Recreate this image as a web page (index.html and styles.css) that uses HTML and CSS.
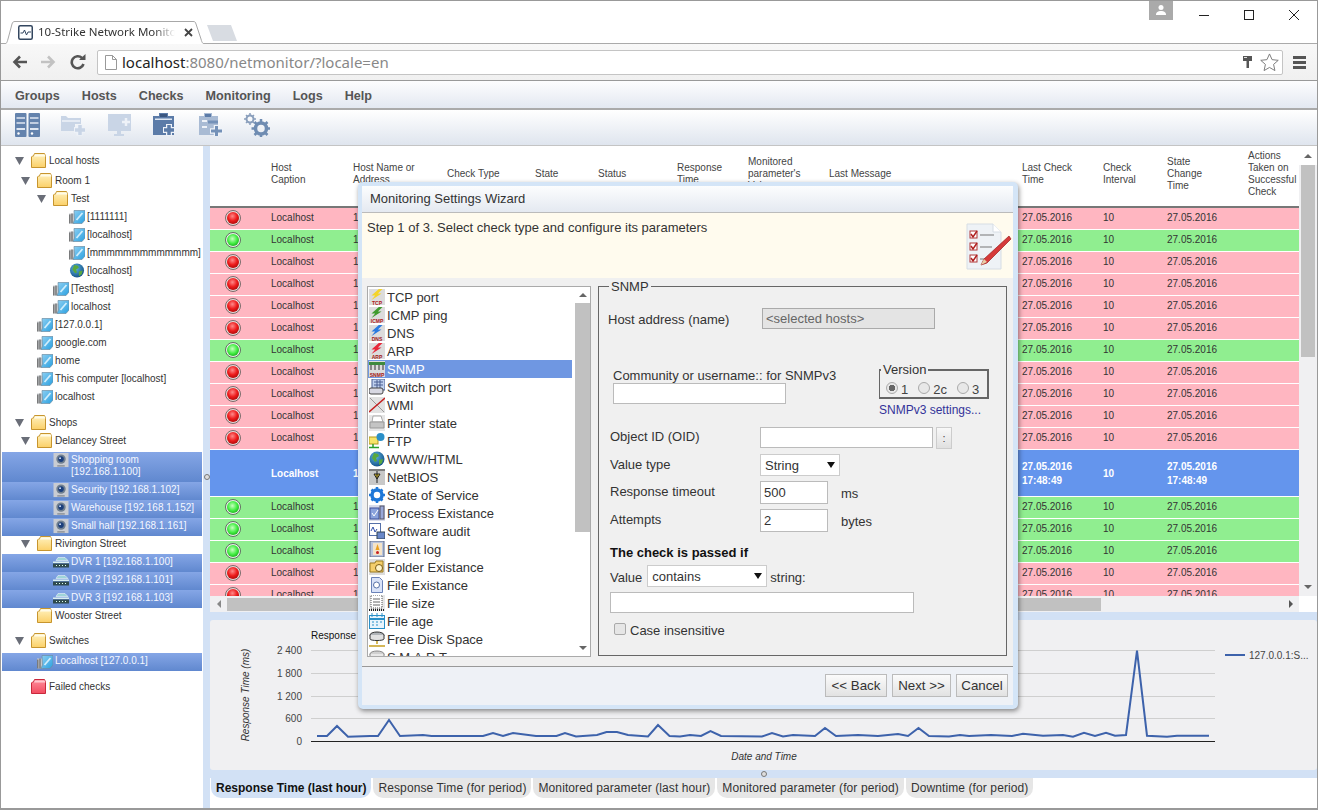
FILE: index.html
```html
<!DOCTYPE html>
<html lang="en">
<head>
<meta charset="utf-8">
<title>10-Strike Network Monitor</title>
<link rel="stylesheet" href="styles.css">
</head>
<body>
<svg class="defs" aria-hidden="true">
  <defs>
    <linearGradient id="fg" x1="0" y1="0" x2="0" y2="1"><stop offset="0" stop-color="#fff2c0"/><stop offset="1" stop-color="#fbd068"/></linearGradient>
    <linearGradient id="fr" x1="0" y1="0" x2="0" y2="1"><stop offset="0" stop-color="#ff8f9c"/><stop offset="1" stop-color="#f24b60"/></linearGradient>
    <linearGradient id="mon" x1="0" y1="0" x2="1" y2="1"><stop offset="0" stop-color="#8fd0f2"/><stop offset="1" stop-color="#2aa0e0"/></linearGradient>
    <radialGradient id="rb" cx=".45" cy=".35" r=".7"><stop offset="0" stop-color="#ff8a8a"/><stop offset=".55" stop-color="#ee1c1c"/><stop offset="1" stop-color="#a80808"/></radialGradient>
    <radialGradient id="gb" cx=".45" cy=".4" r=".7"><stop offset="0" stop-color="#c8ffc0"/><stop offset=".55" stop-color="#44ee44"/><stop offset="1" stop-color="#12a012"/></radialGradient>
    <radialGradient id="gl" cx=".4" cy=".35" r=".7"><stop offset="0" stop-color="#5db4e0"/><stop offset="1" stop-color="#124f86"/></radialGradient>
    <symbol id="folder" viewBox="0 0 16 15"><path d="M.5 14.500V4l1-1h1l1-2.500h10l1 2.500v11.500z" fill="url(#fg)" stroke="#c7952e"/><path d="M3.800 1.500h9.900l.8 2H3z" fill="#fffbe8"/></symbol>
    <symbol id="folder-red" viewBox="0 0 16 15"><path d="M.5 14.500V4l1-1h1l1-2.500h10l1 2.500v11.500z" fill="url(#fr)" stroke="#c9283c"/><path d="M3.800 1.500h9.900l.8 2H3z" fill="#ffc8cf"/></symbol>
    <symbol id="tw" viewBox="0 0 9 9"><path d="M0 1h9L4.500 9z" fill="#6a6e78"/></symbol>
    <symbol id="host" viewBox="0 0 16 14"><path d="M0 4h6v10H0z" fill="#c8ccd0"/><path d="M.8 5v9M3 4v10" stroke="#666" stroke-width="1.200"/><path d="M5 1h11v9.500L13 14H4l1.500-3.500z" fill="url(#mon)" stroke="#6f8ea4" stroke-width=".7"/><path d="M7.500 10.500l6-7" stroke="#d0eefc" stroke-width="1.800"/></symbol>
    <symbol id="globe" viewBox="0 0 16 16"><circle cx="8" cy="8" r="7.500" fill="url(#gl)"/><path d="M5 2l4 1 1 2-3 2 1 3-2 1-3-4zM10 9l4-1-1 4-3 2z" fill="#5aa83e"/></symbol>
    <symbol id="cam" viewBox="0 0 16 16"><rect width="16" height="15" fill="#c9ccd2"/><circle cx="8" cy="6.500" r="5" fill="#6f7f90"/><circle cx="8" cy="6.500" r="3" fill="#1c3f7c"/><circle cx="7" cy="5.500" r="1" fill="#d8e8ff"/><path d="M4 13h8v1.500H4z" fill="#8a8f96"/></symbol>
    <symbol id="dvr" viewBox="0 0 16 14"><path d="M3 5l2-3h7l3 3z" fill="#9fd4d8" stroke="#fff" stroke-width=".5"/><rect x="0" y="6" width="16" height="1.500" fill="#d9eef0"/><rect x="0" y="8" width="16" height="4" fill="#2f4a4e"/><path d="M3 10h1M6 10h1M9 10h1M12 10h1" stroke="#dfe" stroke-width="1"/></symbol>
    <symbol id="red" viewBox="0 0 16 16"><circle cx="8" cy="8" r="7.500" fill="#e8d8d8" stroke="#7a6a6a"/><circle cx="8" cy="8" r="6" fill="url(#rb)"/></symbol>
    <symbol id="green" viewBox="0 0 16 16"><circle cx="8" cy="8" r="7.500" fill="#e8f2e8" stroke="#5f6f5f"/><circle cx="8" cy="8" r="6" fill="url(#gb)"/></symbol>
    <symbol id="bolt" viewBox="0 0 16 12"><path d="M10 0L2 7h4l-4 5 11-7H9l5-5z"/></symbol>
  </defs>
</svg>

<div class="window">
  <div class="tabstrip">
    <div class="tab">
      <svg class="tab-shape" viewBox="0 0 206 24" width="206" height="24"><path d="M0 23.500C3 23.500 4 22 5 18L9 3C9.500 1 10.500.5 12 .5H190C192 .5 192.500 1 193 3L198 18C199 22 200 23.500 204 23.500" fill="#fff" stroke="#a8a8a8"/></svg>
      <svg class="favicon" viewBox="0 0 15 15" width="15" height="15"><rect x=".75" y=".75" width="13.500" height="13.500" rx="1.500" fill="#fff" stroke="#33465f" stroke-width="1.500"/><path d="M2.500 8h2.500l1.500-3 2 5 1.500-3h3" fill="none" stroke="#33465f"/></svg>
      <span class="tab-title">10-Strike Network Monitor</span>
      <svg class="tab-x" viewBox="0 0 9 9" width="9" height="9"><path d="M1 1l7 7M8 1l-7 7" stroke="#444" stroke-width="1.800"/></svg>
    </div>
    <svg class="newtab" viewBox="0 0 32 16" width="32" height="16"><path d="M1 0h24l6 16H7z" fill="#d8dce2"/></svg>
    <div class="winctl">
      <div class="profile"><svg viewBox="0 0 12 10" width="12" height="10"><circle cx="6" cy="2.500" r="2.500" fill="#fff"/><path d="M1 10c0-3 2-4 5-4s5 1 5 4z" fill="#fff"/></svg></div>
      <div class="ctl"><svg viewBox="0 0 10 10" width="10" height="10"><path d="M0 5.500h10" stroke="#222"/></svg></div>
      <div class="ctl"><svg viewBox="0 0 10 10" width="10" height="10"><rect x=".5" y=".5" width="9" height="9" fill="none" stroke="#222"/></svg></div>
      <div class="ctl"><svg viewBox="0 0 10 10" width="10" height="10"><path d="M0 0l10 10M10 0L0 10" stroke="#222"/></svg></div>
    </div>
  </div>

  <div class="urlbar">
    <svg class="nav nav-back" viewBox="0 0 16 14" width="16" height="14"><path d="M15 7H3M8 1.500L2.500 7 8 12.500" fill="none" stroke="#555" stroke-width="2.600"/></svg>
    <svg class="nav nav-fwd" viewBox="0 0 16 14" width="16" height="14"><path d="M1 7h12M8 1.500L13.500 7 8 12.500" fill="none" stroke="#c2c2c2" stroke-width="2.600"/></svg>
    <svg class="nav nav-reload" viewBox="0 0 16 16" width="16" height="16"><path d="M13.500 10A6 6 0 1 1 12 4" fill="none" stroke="#555" stroke-width="2.600"/><path d="M9 6h6.500V0z" fill="#555"/></svg>
    <div class="address">
      <svg class="page-ico" viewBox="0 0 12 15" width="12" height="15"><path d="M.5.5h7l4 4v10H.5z" fill="#fff" stroke="#999"/><path d="M7.500.5v4h4" fill="none" stroke="#999"/></svg>
      <span class="url"><b>localhost</b>:8080/netmonitor/?locale=en</span>
      <svg class="key" viewBox="0 0 9 12" width="9" height="12"><path d="M0 0h9v5H6v7H3.500V5H0z" fill="#555"/><path d="M1 1.500h3" stroke="#ddd"/></svg>
      <svg class="star" viewBox="0 0 20 20" width="19" height="19"><path d="M10 1l2.700 6 6.500.7-4.900 4.300 1.400 6.500L10 15.200 4.300 18.500l1.400-6.500L.8 7.700 7.300 7z" fill="#fff" stroke="#777"/></svg>
    </div>
    <div class="burger"><i></i><i></i><i></i></div>
  </div>

  <nav class="menu"><span>Groups</span><span>Hosts</span><span>Checks</span><span>Monitoring</span><span>Logs</span><span>Help</span></nav>

  <div class="tools">
    <svg class="tool" viewBox="0 0 25 24" width="25" height="24"><g fill="#6483ad"><rect x="0" y="0" width="11.500" height="24" rx="1"/><rect x="13.500" y="0" width="11.500" height="24" rx="1"/></g><path d="M1.500 5h8.500M1.500 10h8.500M15 5h8.500M15 10h8.500" stroke="#dfe7f2" stroke-width="1.500"/><rect x="1.500" y="15" width="8.500" height="2" fill="#dfe7f2"/><rect x="15" y="15" width="8.500" height="2" fill="#dfe7f2"/><circle cx="3.500" cy="20.500" r="1.200" fill="#fff"/><circle cx="17" cy="20.500" r="1.200" fill="#fff"/></svg>
    <svg class="tool" viewBox="0 0 25 24" width="25" height="24"><path d="M0 3h5l2 2h13v6h-6v7H0z" fill="#c9d5e6"/><path d="M1 8h18" stroke="#eef2f8" stroke-width="1.500"/><path d="M13 17h11M18.500 11.500v11" stroke="#eef2f8" stroke-width="6"/><path d="M14 17h10M19 12v10" stroke="#c9d5e6" stroke-width="3.500"/></svg>
    <svg class="tool" viewBox="0 0 25 24" width="25" height="24"><path d="M1 1h23v17H14v3h3v2H7v-2h3v-3H1z" fill="#c9d5e6"/><path d="M15 9h8M19 5v8" stroke="#eef2f8" stroke-width="2.500"/></svg>
    <svg class="tool" viewBox="0 0 22 24" width="22" height="24"><path d="M0 3h6V0h9v3h6v19H0z" fill="#5b7ba8"/><rect x="7" y="1" width="7" height="3" fill="#3a5680"/><rect x="2" y="5.500" width="17" height="1.500" fill="#dfe7f2"/><path d="M10 17h12M16 11v12" stroke="#eef2f8" stroke-width="6"/><path d="M11 17h10M16 12v10" stroke="#5b7ba8" stroke-width="3.500"/></svg>
    <svg class="tool" viewBox="0 0 24 24" width="24" height="24"><path d="M0 3h5V0h8v3h6v19H0z" fill="#a9bbd4"/><rect x="6" y="1" width="6" height="3" fill="#5b7ba8"/><path d="M3 8h5M3 14h5" stroke="#eef2f8" stroke-width="2"/><path d="M9 9h10" stroke="#7491b8" stroke-width="3"/><path d="M11 18h13M17.500 12v11" stroke="#eef2f8" stroke-width="5.500"/><path d="M12 18h11M17.500 13v10" stroke="#7491b8" stroke-width="3"/></svg>
    <svg class="tool" viewBox="0 0 26 24" width="26" height="24"><circle cx="6" cy="6" r="3.500" fill="none" stroke="#8a9fbc" stroke-width="2"/><path d="M6 0v3M6 9v3M0 6h3M9 6h3M2 2l2 2M8 8l2 2M10 2L8 4M4 8l-2 2" stroke="#8a9fbc" stroke-width="1.500"/><circle cx="17" cy="15.500" r="5.500" fill="none" stroke="#6f8cb2" stroke-width="3.500"/><path d="M17 6v3M17 22v3M7.500 15.500h3M23.500 15.500h3M10.500 9l2 2M21.500 20l2 2M23.500 9l-2 2M12.500 20l-2 2" stroke="#6f8cb2" stroke-width="2.500"/></svg>
  </div>

  <div class="main">
    <aside class="tree">
      <div class="node at-a"><svg class="tw"><use href="#tw"/></svg><svg class="fld"><use href="#folder"/></svg><span>Local hosts</span></div>
      <div class="node at-b mt2"><svg class="tw"><use href="#tw"/></svg><svg class="fld"><use href="#folder"/></svg><span>Room 1</span></div>
      <div class="node at-c"><svg class="tw"><use href="#tw"/></svg><svg class="fld"><use href="#folder"/></svg><span>Test</span></div>
      <div class="node at-69"><svg class="ic"><use href="#host"/></svg><span>[1111111]</span></div>
      <div class="node at-69"><svg class="ic"><use href="#host"/></svg><span>[localhost]</span></div>
      <div class="node at-69"><svg class="ic"><use href="#host"/></svg><span>[mmmmmmmmmmmmm]</span></div>
      <div class="node at-69"><svg class="ic"><use href="#globe"/></svg><span>[localhost]</span></div>
      <div class="node at-53"><svg class="ic"><use href="#host"/></svg><span>[Testhost]</span></div>
      <div class="node at-53"><svg class="ic"><use href="#host"/></svg><span>localhost</span></div>
      <div class="node at-37"><svg class="ic"><use href="#host"/></svg><span>[127.0.0.1]</span></div>
      <div class="node at-37"><svg class="ic"><use href="#host"/></svg><span>google.com</span></div>
      <div class="node at-37"><svg class="ic"><use href="#host"/></svg><span>home</span></div>
      <div class="node at-37"><svg class="ic"><use href="#host"/></svg><span>This computer [localhost]</span></div>
      <div class="node at-37"><svg class="ic"><use href="#host"/></svg><span>localhost</span></div>
      <div class="node at-a mt8"><svg class="tw"><use href="#tw"/></svg><svg class="fld"><use href="#folder"/></svg><span>Shops</span></div>
      <div class="node at-b"><svg class="tw"><use href="#tw"/></svg><svg class="fld"><use href="#folder"/></svg><span>Delancey Street</span></div>
      <div class="node at-53 picked tall"><svg class="ic"><use href="#cam"/></svg><span>Shopping room<br>[192.168.1.100]</span></div>
      <div class="node at-53 picked"><svg class="ic"><use href="#cam"/></svg><span>Security [192.168.1.102]</span></div>
      <div class="node at-53 picked"><svg class="ic"><use href="#cam"/></svg><span>Warehouse [192.168.1.152]</span></div>
      <div class="node at-53 picked"><svg class="ic"><use href="#cam"/></svg><span>Small hall [192.168.1.161]</span></div>
      <div class="node at-b"><svg class="tw"><use href="#tw"/></svg><svg class="fld"><use href="#folder"/></svg><span>Rivington Street</span></div>
      <div class="node at-53 picked"><svg class="ic"><use href="#dvr"/></svg><span>DVR 1 [192.168.1.100]</span></div>
      <div class="node at-53 picked"><svg class="ic"><use href="#dvr"/></svg><span>DVR 2 [192.168.1.101]</span></div>
      <div class="node at-53 picked"><svg class="ic"><use href="#dvr"/></svg><span>DVR 3 [192.168.1.103]</span></div>
      <div class="node at-37"><svg class="fld"><use href="#folder"/></svg><span>Wooster Street</span></div>
      <div class="node at-a mt7"><svg class="tw"><use href="#tw"/></svg><svg class="fld"><use href="#folder"/></svg><span>Switches</span></div>
      <div class="node at-37 picked mt2"><svg class="ic"><use href="#host"/></svg><span>Localhost [127.0.0.1]</span></div>
      <div class="node at-31 mt8"><svg class="fld"><use href="#folder-red"/></svg><span>Failed checks</span></div>
    </aside>
    <div class="vsplit"><i class="grip"></i></div>
    <div class="right">
      <div class="gridpane">
        <div class="grid-top">
          <div class="table-view">
            <table class="checks">
              <colgroup>
                <col class="c55"><col class="c82"><col class="c94"><col class="c88"><col class="c63"><col class="c79"><col class="c71"><col class="c81"><col class="c193"><col class="c81"><col class="c64"><col class="c81"><col class="c57">
              </colgroup>
              <thead>
                <tr><th></th><th>Host<br>Caption</th><th>Host Name or<br>Address</th><th>Check Type</th><th>State</th><th>Status</th><th>Response<br>Time</th><th>Monitored<br>parameter's<br>Value</th><th>Last Message</th><th>Last Check<br>Time</th><th>Check<br>Interval</th><th>State<br>Change<br>Time</th><th>Actions<br>Taken on<br>Successful<br>Check</th></tr>
              </thead>
              <tbody>
                <tr class="bad"><td class="bc"><svg class="ball"><use href="#red"/></svg></td><td>Localhost</td><td>127.0.0.1</td><td colspan="6"></td><td>27.05.2016</td><td>10</td><td>27.05.2016</td><td></td></tr>
                <tr class="ok"><td class="bc"><svg class="ball"><use href="#green"/></svg></td><td>Localhost</td><td>127.0.0.1</td><td colspan="6"></td><td>27.05.2016</td><td>10</td><td>27.05.2016</td><td></td></tr>
                <tr class="bad"><td class="bc"><svg class="ball"><use href="#red"/></svg></td><td>Localhost</td><td>127.0.0.1</td><td colspan="6"></td><td>27.05.2016</td><td>10</td><td>27.05.2016</td><td></td></tr>
                <tr class="bad"><td class="bc"><svg class="ball"><use href="#red"/></svg></td><td>Localhost</td><td>127.0.0.1</td><td colspan="6"></td><td>27.05.2016</td><td>10</td><td>27.05.2016</td><td></td></tr>
                <tr class="bad"><td class="bc"><svg class="ball"><use href="#red"/></svg></td><td>Localhost</td><td>127.0.0.1</td><td colspan="6"></td><td>27.05.2016</td><td>10</td><td>27.05.2016</td><td></td></tr>
                <tr class="bad"><td class="bc"><svg class="ball"><use href="#red"/></svg></td><td>Localhost</td><td>127.0.0.1</td><td colspan="6"></td><td>27.05.2016</td><td>10</td><td>27.05.2016</td><td></td></tr>
                <tr class="ok"><td class="bc"><svg class="ball"><use href="#green"/></svg></td><td>Localhost</td><td>127.0.0.1</td><td colspan="6"></td><td>27.05.2016</td><td>10</td><td>27.05.2016</td><td></td></tr>
                <tr class="bad"><td class="bc"><svg class="ball"><use href="#red"/></svg></td><td>Localhost</td><td>127.0.0.1</td><td colspan="6"></td><td>27.05.2016</td><td>10</td><td>27.05.2016</td><td></td></tr>
                <tr class="bad"><td class="bc"><svg class="ball"><use href="#red"/></svg></td><td>Localhost</td><td>127.0.0.1</td><td colspan="6"></td><td>27.05.2016</td><td>10</td><td>27.05.2016</td><td></td></tr>
                <tr class="bad"><td class="bc"><svg class="ball"><use href="#red"/></svg></td><td>Localhost</td><td>127.0.0.1</td><td colspan="6"></td><td>27.05.2016</td><td>10</td><td>27.05.2016</td><td></td></tr>
                <tr class="bad"><td class="bc"><svg class="ball"><use href="#red"/></svg></td><td>Localhost</td><td>127.0.0.1</td><td colspan="6"></td><td>27.05.2016</td><td>10</td><td>27.05.2016</td><td></td></tr>
                <tr class="cur"><td class="bc"></td><td>Localhost</td><td>127.0.0.1</td><td colspan="6"></td><td>27.05.2016<br>17:48:49</td><td>10</td><td>27.05.2016<br>17:48:49</td><td></td></tr>
                <tr class="ok"><td class="bc"><svg class="ball"><use href="#green"/></svg></td><td>Localhost</td><td>127.0.0.1</td><td colspan="6"></td><td>27.05.2016</td><td>10</td><td>27.05.2016</td><td></td></tr>
                <tr class="ok"><td class="bc"><svg class="ball"><use href="#green"/></svg></td><td>Localhost</td><td>127.0.0.1</td><td colspan="6"></td><td>27.05.2016</td><td>10</td><td>27.05.2016</td><td></td></tr>
                <tr class="ok"><td class="bc"><svg class="ball"><use href="#green"/></svg></td><td>Localhost</td><td>127.0.0.1</td><td colspan="6"></td><td>27.05.2016</td><td>10</td><td>27.05.2016</td><td></td></tr>
                <tr class="bad"><td class="bc"><svg class="ball"><use href="#red"/></svg></td><td>Localhost</td><td>127.0.0.1</td><td colspan="6"></td><td>27.05.2016</td><td>10</td><td>27.05.2016</td><td></td></tr>
                <tr class="bad"><td class="bc"><svg class="ball"><use href="#red"/></svg></td><td>Localhost</td><td>127.0.0.1</td><td colspan="6"></td><td>27.05.2016</td><td>10</td><td>27.05.2016</td><td></td></tr>
              </tbody>
            </table>
          </div>
          <div class="vbar"><div class="vbar-end"><i class="ar-up"></i></div><div class="vthumb"></div><div class="vtrack"></div><div class="vbar-end end-low"><i class="ar-down"></i></div></div>
        </div>
        <div class="hbar-row">
          <div class="hbar"><div class="hend"><i class="ar-left"></i></div><div class="hthumb"></div><div class="htrack"></div><div class="hend"><i class="ar-right"></i></div></div>
          <div class="corner"></div>
        </div>
      </div>
      <div class="hsplit"></div>
      <div class="chart">
        <svg viewBox="210 620 1107 150" width="1107" height="150">
          <g stroke="#cfcfcf"><path d="M311 650.500H1215M311 673.500H1215M311 696.500H1215M311 718.500H1215"/></g>
          <path d="M311 741.500H1215" stroke="#222"/>
          <g class="tick" text-anchor="end"><text x="302" y="654">2 400</text><text x="302" y="677">1 800</text><text x="302" y="700">1 200</text><text x="302" y="722">600</text><text x="302" y="745">0</text></g>
          <text class="ctitle" x="311" y="639">Response Time (last hour)</text>
          <text class="axis" transform="translate(249 695) rotate(-90)" text-anchor="middle">Response Time (ms)</text>
          <text class="axis" x="764" y="760" text-anchor="middle">Date and Time</text>
          <polyline fill="none" stroke="#3d62ab" stroke-width="2" points="317,736 327,736 337,726 348,736.700 370,736 378,736 389,720 400,736 423,735 431.500,736 483,736 493,733 503,736 513,733 536,736 556.500,736 565,733 576,736.500 597,735 606.500,732 617,732 628,735 648,736.500 658,725 669.500,736 680,736.500 690,735 701,736 710.500,731 721,736 762,736.500 772,733 783,736.500 793,735 815,736 825,728 836,736 858,735 878,736 898,734 908,736 918.500,728 929,736 949,736.500 960,735 969,736 991,735 1012,736 1023,733.700 1043,735.700 1063,735 1073,736.700 1084,732.700 1095,736 1106,732.700 1115,735.700 1126,735 1137,650.700 1147,735.700 1167,736.700 1177,735.700 1209,735.700"/>
          <path d="M1225 655h20" stroke="#3d62ab" stroke-width="2"/>
          <text class="legend" x="1249" y="659">127.0.0.1:S...</text>
        </svg>
      </div>
      <div class="hsplit"><i class="grip"></i></div>
      <div class="tabs"><span class="t on">Response Time (last hour)</span><span class="t">Response Time (for period)</span><span class="t">Monitored parameter (last hour)</span><span class="t">Monitored parameter (for period)</span><span class="t">Downtime (for period)</span></div>
    </div>
  </div>

  <section class="wizard">
    <header class="wz-title">Monitoring Settings Wizard</header>
    <div class="wz-step">
      <span>Step 1 of 3. Select check type and configure its parameters</span>
      <svg class="wz-icon" viewBox="0 0 46 48" width="46" height="48"><path d="M1 1h26l8 8v37H1z" fill="#eef2f6" stroke="#d6dde4"/><path d="M27 1v8h8" fill="#fff" stroke="#d6dde4"/><g fill="#fff" stroke="#b03838"><rect x="4" y="8" width="7" height="7"/><rect x="4" y="20" width="7" height="7"/><rect x="4" y="32" width="7" height="7"/></g><path d="M5 11l2 3 4-6M5 23l2 3 4-6M5 35l2 3 4-6" fill="none" stroke="#b02020" stroke-width="1.500"/><path d="M14 12h14M14 24h12M14 36h10" stroke="#777"/><path d="M15 42l3-6 25-23 2 3-24 24z" fill="#d63a3a" stroke="#9c1f1f" stroke-width=".7"/><path d="M15 42l3-6 3 3z" fill="#e8cfa8"/></svg>
    </div>
    <div class="wz-body">
      <div class="listbox">
        <ul class="types">
          <li><svg class="ti"><use href="#i-tcp"/></svg>TCP port</li>
          <li><svg class="ti"><use href="#i-icmp"/></svg>ICMP ping</li>
          <li><svg class="ti"><use href="#i-dns"/></svg>DNS</li>
          <li><svg class="ti"><use href="#i-arp"/></svg>ARP</li>
          <li class="on"><svg class="ti"><use href="#i-snmp"/></svg>SNMP</li>
          <li><svg class="ti"><use href="#i-switch"/></svg>Switch port</li>
          <li><svg class="ti"><use href="#i-wmi"/></svg>WMI</li>
          <li><svg class="ti"><use href="#i-printer"/></svg>Printer state</li>
          <li><svg class="ti"><use href="#i-ftp"/></svg>FTP</li>
          <li><svg class="ti"><use href="#globe"/></svg>WWW/HTML</li>
          <li><svg class="ti"><use href="#i-netbios"/></svg>NetBIOS</li>
          <li><svg class="ti"><use href="#i-service"/></svg>State of Service</li>
          <li><svg class="ti"><use href="#i-process"/></svg>Process Existance</li>
          <li><svg class="ti"><use href="#i-audit"/></svg>Software audit</li>
          <li><svg class="ti"><use href="#i-log"/></svg>Event log</li>
          <li><svg class="ti"><use href="#i-fold"/></svg>Folder Existance</li>
          <li><svg class="ti"><use href="#i-file"/></svg>File Existance</li>
          <li><svg class="ti"><use href="#i-size"/></svg>File size</li>
          <li><svg class="ti"><use href="#i-age"/></svg>File age</li>
          <li><svg class="ti"><use href="#i-disk"/></svg>Free Disk Space</li>
          <li><svg class="ti"><use href="#i-smart"/></svg>S.M.A.R.T.</li>
        </ul>
        <div class="lbar"><div class="lbar-end"><i class="ar-up"></i></div><div class="lthumb"></div><div class="lbar-fill"></div><div class="lbar-end"><i class="ar-down"></i></div></div>
      </div>
      <fieldset class="snmp">
        <legend>SNMP</legend>
        <div class="f-host">
          <label class="l-host">Host address (name)</label>
          <input class="inp w173 ro" value="&lt;selected hosts&gt;" readonly>
        </div>
        <div class="f-comm">
          <div class="comm">
            <label>Community or username:: for SNMPv3</label>
            <input class="inp w173">
          </div>
          <div class="ver">
            <fieldset class="version">
              <legend>Version</legend>
              <div class="radios">
                <input type="radio" name="v" class="rd" checked><span class="rl">1</span>
                <input type="radio" name="v" class="rd r2"><span class="rl">2c</span>
                <input type="radio" name="v" class="rd r3"><span class="rl">3</span>
              </div>
            </fieldset>
            <a class="v3" href="#">SNMPv3 settings...</a>
          </div>
        </div>
        <div class="f-row r-oid"><label>Object ID (OID)</label><input class="inp w173"><button class="dots" type="button">:</button></div>
        <div class="f-row r-type"><label>Value type</label><div class="selwrap w80"><select class="dd"><option>String</option></select></div></div>
        <div class="f-row r-time"><label>Response timeout</label><input class="inp num" value="500"><span class="unit">ms</span></div>
        <div class="f-row r-att"><label>Attempts</label><input class="inp num" value="2"><span class="unit">bytes</span></div>
        <div class="passed">The check is passed if</div>
        <div class="f-val"><span>Value</span><div class="selwrap w120"><select class="dd"><option>contains</option></select></div><span>string:</span></div>
        <input class="inp wide">
        <label class="case"><input type="checkbox" class="cb"><span>Case insensitive</span></label>
      </fieldset>
    </div>
    <footer class="wz-foot">
      <button class="btn b-back" type="button">&lt;&lt; Back</button>
      <button class="btn b-next" type="button">Next &gt;&gt;</button>
      <button class="btn b-cancel" type="button">Cancel</button>
    </footer>
  </section>
</div>

<svg class="defs" aria-hidden="true">
  <defs>
    <symbol id="i-tcp" viewBox="0 0 16 16"><rect width="16" height="16" fill="#dcdcdc"/><use href="#bolt" width="16" height="11" fill="#f4d428"/><text class="tiny" x="8" y="15.500" fill="#b01818">TCP</text></symbol>
    <symbol id="i-icmp" viewBox="0 0 16 16"><rect width="16" height="16" fill="#dcdcdc"/><use href="#bolt" width="16" height="11" fill="#3f9a2e"/><text class="tiny" x="8" y="15.500" fill="#b01818">ICMP</text></symbol>
    <symbol id="i-dns" viewBox="0 0 16 16"><rect width="16" height="16" fill="#dcdcdc"/><use href="#bolt" width="16" height="11" fill="#2a7ae0"/><text class="tiny" x="8" y="15.500" fill="#a01818">DNS</text></symbol>
    <symbol id="i-arp" viewBox="0 0 16 16"><rect width="16" height="16" fill="#dcdcdc"/><use href="#bolt" width="16" height="11" fill="#e8283a"/><text class="tiny" x="8" y="15.500" fill="#a01818">ARP</text></symbol>
    <symbol id="i-snmp" viewBox="0 0 16 16"><rect width="16" height="16" fill="#dcdcdc"/><rect y="1" width="16" height="3" fill="#3e8a3e"/><path d="M2 4v5M6 4v5M10 4v5M14 4v5" stroke="#333"/><text class="tiny" x="8" y="15.500" fill="#a01818">SNMP</text></symbol>
    <symbol id="i-switch" viewBox="0 0 16 16"><rect x="3" y="0" width="13" height="11" fill="#bfd0ee" stroke="#4a5f92"/><path d="M5 3h9M5 6h9M8 1v8M11 1v8" stroke="#4a5f92"/><rect x="0" y="9" width="14" height="6" rx="2" fill="#d8d8e2" stroke="#444"/></symbol>
    <symbol id="i-wmi" viewBox="0 0 16 16"><rect width="16" height="16" fill="#e2e2e2"/><path d="M1 1l14 14" stroke="#999"/><path d="M0 15L16 1" stroke="#c42020" stroke-width="1.500"/></symbol>
    <symbol id="i-printer" viewBox="0 0 16 16"><rect width="16" height="16" fill="#e6e6e6"/><path d="M4 1h8l2 6H3z" fill="#fff" stroke="#aaa"/><path d="M1 7h14v6H1z" fill="#c4c4c4" stroke="#999"/></symbol>
    <symbol id="i-ftp" viewBox="0 0 16 16"><rect x="0" y="4" width="9" height="7" fill="#f6e468" stroke="#b09a20"/><circle cx="11.500" cy="4" r="4" fill="#2a8fc8"/><path d="M4 11v3M0 14.500h10" stroke="#2aa02a" stroke-width="1.500"/></symbol>
    <symbol id="i-netbios" viewBox="0 0 16 16"><rect width="16" height="16" fill="#c8c8c8"/><path d="M0 1h16" stroke="#333"/><path d="M8 2v12M5 5h6l-3 5z" stroke="#222" fill="#e8c828"/></symbol>
    <symbol id="i-service" viewBox="0 0 16 16"><circle cx="8" cy="8" r="5" fill="none" stroke="#1f78d8" stroke-width="3.500"/><path d="M8 0v3M8 13v3M0 8h3M13 8h3M2.500 2.500l2 2M11.500 11.500l2 2M13.500 2.500l-2 2M4.500 11.500l-2 2" stroke="#1f78d8" stroke-width="2.500"/></symbol>
    <symbol id="i-process" viewBox="0 0 16 16"><rect width="16" height="16" fill="#d8dcea"/><rect x="1" y="3" width="9" height="11" fill="#8aa2dc" stroke="#3c4f98"/><path d="M3 8l2 3 4-6" fill="none" stroke="#fff"/><rect x="11" y="1" width="4" height="13" fill="#98a8d8" stroke="#556"/></symbol>
    <symbol id="i-audit" viewBox="0 0 16 16"><rect x=".5" y=".5" width="11" height="12" fill="#fff" stroke="#5570a8"/><path d="M2 8l2-4 2 5 2-3" fill="none" stroke="#3050a8"/><rect x="8" y="9" width="8" height="7" fill="#6a88c8" stroke="#345"/></symbol>
    <symbol id="i-log" viewBox="0 0 16 16"><rect x="1" y="0" width="14" height="16" fill="#b8c4dc" stroke="#5a6a8a"/><rect x="4" y="2" width="9" height="12" fill="#f4e4c8"/><path d="M8.500 3l2 6h-4z" fill="#e8a020"/><circle cx="8.500" cy="11.500" r="1.500" fill="#c82020"/></symbol>
    <symbol id="i-fold" viewBox="0 0 16 16"><rect width="16" height="16" fill="#dcdcdc"/><path d="M1 4h5l1-2h7v11H1z" fill="#f4ce6a" stroke="#9a7a20"/><circle cx="10" cy="9" r="3.500" fill="#fff4c8" stroke="#7a5a10"/></symbol>
    <symbol id="i-file" viewBox="0 0 16 16"><path d="M2.500.5h8l3 3v12h-11z" fill="#d8e2f8" stroke="#6a82b8"/><circle cx="7.500" cy="8" r="3" fill="#fff" stroke="#5570a8"/></symbol>
    <symbol id="i-size" viewBox="0 0 16 16"><rect width="16" height="16" fill="#e6e6e6"/><rect x="2" y="0" width="11" height="13" fill="#fff" stroke="#555" stroke-dasharray="1 1"/><path d="M4 4h7M4 7h7M4 10h7" stroke="#666"/><path d="M0 15h16" stroke="#222" stroke-dasharray="1 1" stroke-width="2"/></symbol>
    <symbol id="i-age" viewBox="0 0 16 16"><rect x=".5" y="2.500" width="15" height="13" fill="#e8f4fc" stroke="#2a90c8"/><path d="M1 6h14" stroke="#2a90c8" stroke-width="2"/><path d="M3 0v4M8 0v4M13 0v4" stroke="#2a90c8"/><path d="M3 9h2M7 9h2M11 9h2M3 12h2M7 12h2" stroke="#2a90c8"/></symbol>
    <symbol id="i-disk" viewBox="0 0 16 16"><ellipse cx="8" cy="4" rx="7" ry="3" fill="#b0b4b8" stroke="#333"/><path d="M1 4v4c0 2 14 2 14 0V4" fill="#e2e2e2" stroke="#333"/><path d="M8 10v3M0 15h16" stroke="#c8a020" stroke-width="1.500"/></symbol>
    <symbol id="i-smart" viewBox="0 0 16 16"><ellipse cx="8" cy="5" rx="7" ry="3" fill="#d0d0d0" stroke="#888"/><path d="M1 5v6h14V5" fill="#e8e8e8" stroke="#888"/></symbol>
  </defs>
</svg>
</body>
</html>
```

FILE: styles.css
```css
* { box-sizing: border-box; }
html, body { margin: 0; padding: 0; }
body { width: 1318px; height: 810px; overflow: hidden; background: #fff; font-family: "Liberation Sans", Arial, sans-serif; font-size: 10px; color: #333; }
.defs { position: absolute; width: 0; height: 0; overflow: hidden; }
.window { position: relative; width: 1318px; height: 810px; border: 1px solid #999; border-bottom-width: 2px; display: flex; flex-direction: column; overflow: hidden; background: #fff; }

/* browser chrome */
.tabstrip { height: 43px; display: flex; align-items: flex-end; background: #fff; border-bottom: 1px solid #aaa; padding-left: 2px; flex: none; }
.tab { position: relative; width: 204px; height: 23px; margin-bottom: -1px; display: flex; align-items: center; padding-left: 15px; }
.tab-shape { position: absolute; left: 0; top: 0; }
.favicon { position: relative; flex: none; margin-top: -1px; }
.tab-title { position: relative; font: 11.500px "Noto Sans", sans-serif; line-height: 14px; margin-top: -2px; color: #333; margin-left: 5px; width: 137px; white-space: nowrap; overflow: hidden; -webkit-mask-image: linear-gradient(90deg, #000 85%, transparent); mask-image: linear-gradient(90deg, #000 85%, transparent); }
.tab-x { position: relative; margin-left: 9px; }
.newtab { align-self: flex-end; margin: 0 0 2px -1px; }
.winctl { margin-left: auto; align-self: flex-start; display: flex; padding-right: 1px; }
.profile { width: 24px; height: 20px; background: #aaa; display: flex; justify-content: center; align-items: center; margin-right: 8px; margin-top: -1px; }
.ctl { width: 45px; height: 28px; display: flex; align-items: center; justify-content: center; }

.urlbar { height: 37px; flex: none; display: flex; align-items: center; background: linear-gradient(#f8f8f8, #f0f0f0); border-bottom: 1px solid #999; position: relative; }
.nav { flex: none; }
.nav-back { margin-left: 11px; }
.nav-fwd { margin-left: 12px; }
.nav-reload { margin-left: 14px; }
.address { margin-left: 11px; width: 1186px; height: 25px; background: #fff; border: 1px solid #c4c4c4; border-radius: 2px; display: flex; align-items: center; padding-left: 7px; }
.page-ico { flex: none; }
.url { margin-left: 5px; font: 15px "Noto Sans", sans-serif; color: #888; white-space: nowrap; flex: 1; }
.url b { font-weight: 400; color: #222; }
.key { flex: none; margin-left: 2px; }
.star { flex: none; margin: 0 3px 0 8px; }
.burger { margin-left: 10px; width: 13px; display: flex; flex-direction: column; gap: 2px; }
.burger i { display: block; height: 3px; background: #555; }

.menu { height: 29px; flex: none; display: flex; gap: 22px; align-items: center; padding: 2px 0 0 14px; background: linear-gradient(#fdfdfe, #e3e8f1); border-bottom: 2px solid #aaa; font-size: 12.600px; font-weight: 700; color: #555; }
.tools { height: 36px; flex: none; display: flex; align-items: center; padding: 0 0 5px 14px; background: linear-gradient(#fff, #dfe5ee); border-bottom: 1px solid #c4c4c4; }
.tool { margin-right: 21px; flex: none; }
.tool:nth-child(4) { margin-right: 24px; }

/* main */
.main { flex: 1; display: flex; min-height: 0; }
.tree { width: 201px; flex: none; padding: 7px 0 0 1px; background: #fff; }
.node { display: flex; align-items: flex-start; height: 18px; color: #333; line-height: 15px; white-space: nowrap; }
.node span { margin-left: 2px; }
.tw { width: 9px; height: 9px; margin: 3px 7px 0 0; flex: none; }
.fld { width: 16px; height: 15px; flex: none; }
.ic { width: 16px; height: 15px; flex: none; }
.at-a { padding-left: 13px; }
.at-b { padding-left: 19px; }
.at-c { padding-left: 35px; }
.at-31 { padding-left: 29px; }
.at-37 { padding-left: 35px; }
.at-53 { padding-left: 51px; }
.at-69 { padding-left: 67px; }
.mt2 { margin-top: 2px; }
.mt7 { margin-top: 7px; }
.mt8 { margin-top: 8px; }
.picked { background: linear-gradient(#85a6e6, #6088cf); padding-top: 1px; }
.picked span { color: #f4f7ff; margin-top: -1px; }
.tall { height: 30px; margin-top: 1px; line-height: 12px; }
.tall span { margin-top: 1px; }

.vsplit { width: 7px; flex: none; background: #d2e1f5; margin-left: 1px; display: flex; align-items: center; justify-content: center; }
.grip { display: block; width: 6px; height: 6px; border: 1.500px solid #777; border-radius: 50%; background: #ddd; }
.right { flex: 1; min-width: 0; display: flex; flex-direction: column; background: #d2e1f5; }

.gridpane { height: 466px; flex: none; display: flex; flex-direction: column; background: #fff; }
.grid-top { height: 450px; display: flex; flex: none; }
.table-view { width: 1089px; height: 450px; overflow: hidden; flex: none; }
.checks { width: 1089px; table-layout: fixed; border-collapse: collapse; font-size: 10px; }
.c55 { width: 55px; } .c82 { width: 82px; } .c94 { width: 94px; } .c88 { width: 88px; } .c63 { width: 63px; } .c79 { width: 79px; } .c71 { width: 71px; } .c81 { width: 81px; } .c193 { width: 193px; } .c64 { width: 64px; } .c57 { width: 57px; }
.checks th { height: 61px; padding: 0 0 5px 6px; font-weight: 400; color: #444; text-align: left; line-height: 12px; border-bottom: 2px solid #777; white-space: nowrap; overflow: hidden; }
.checks td { height: 22px; padding: 0 0 0 6px; color: #333; border-bottom: 1px solid rgba(255,255,255,.25); white-space: nowrap; overflow: hidden; line-height: 14px; }
.checks td.bc { padding-left: 15px; }
.ball { width: 16px; height: 16px; display: block; }
.bad { background: #ffb6c1; }
.ok { background: #90ee90; }
.cur { background: #6495ed; }
.checks .cur td { height: 47px; padding-top: 2px; color: #fff; font-weight: 700; }
.vbar { width: 18px; flex: none; display: flex; flex-direction: column; background: #f0f0f2; }
.vbar-end { height: 19px; flex: none; background: #fff; display: flex; align-items: center; justify-content: center; }
.end-low { background: #f0f0f2; }
.vthumb { height: 192px; margin: 0 2px; background: #c1c1c1; flex: none; }
.vtrack { flex: 1; }
.ar-up, .ar-down, .ar-left, .ar-right { display: block; width: 0; height: 0; border: 4px solid transparent; }
.ar-up { border-bottom: 4px solid #666; border-top-width: 0; }
.ar-down { border-top: 4px solid #666; border-bottom-width: 0; }
.ar-left { border-right: 4px solid #888; border-left-width: 0; }
.ar-right { border-left: 4px solid #555; border-right-width: 0; }
.hbar-row { height: 16px; display: flex; flex: none; }
.hbar { width: 1089px; flex: none; display: flex; background: #f0f0f2; align-items: center; }
.hend { width: 17px; height: 16px; flex: none; display: flex; align-items: center; justify-content: center; }
.hthumb { width: 874px; height: 13px; background: #c1c1c1; flex: none; }
.htrack { flex: 1; }
.corner { flex: 1; background: #fff; }
.hsplit { height: 8px; flex: none; background: #d2e1f5; display: flex; align-items: center; justify-content: center; }
.chart { height: 150px; flex: none; background: #f0f0f2; border-radius: 3px; }
.chart svg { display: block; }
.tick text { font-size: 10px; fill: #444; }
.ctitle { font-size: 10px; fill: #111; }
.axis { font-size: 10px; font-style: italic; fill: #333; }
.legend { font-size: 10px; fill: #444; }
.tabs { flex: 1; display: flex; gap: 2px; padding-left: 1px; background: #fff; align-items: flex-start; font-size: 12px; }
.t { height: 20px; padding: 2px 5px 0; background: #e6e6e6; color: #333; border-radius: 0 0 10px 10px; line-height: 17px; white-space: nowrap; letter-spacing: .1px; }
.t.on { background: #d2e1f5; font-weight: 700; color: #111; letter-spacing: 0; }

/* wizard */
.wizard { position: absolute; left: 357px; top: 181px; width: 660px; height: 527px; background: #f0f0f0; border: 4px solid #d4e5f7; border-right-width: 5px; border-radius: 5px; box-shadow: 1px 2px 5px rgba(0,0,0,.45); display: flex; flex-direction: column; font-size: 13px; color: #333; }
.wz-title { height: 27px; flex: none; padding: 0 8px; line-height: 26px; background: linear-gradient(#fcfdfe, #e4e9f1); border-bottom: 1px solid #bbb; color: #333; }
.wz-step { height: 65px; flex: none; background: #fffbee; display: flex; justify-content: space-between; padding: 7px 0 0 5px; }
.wz-icon { flex: none; margin-top: 3px; margin-right: 1px; }
.wz-body { height: 389px; flex: none; display: flex; padding: 8px 6px 0 5px; gap: 7px; border-bottom: 1px solid #999; }
.listbox { width: 224px; height: 371px; flex: none; background: #fff; border: 1px solid #aaa; display: flex; overflow: hidden; }
.types { list-style: none; margin: 0; padding: 1px 0 0; width: 204px; flex: none; }
.types li { height: 18px; display: flex; align-items: center; white-space: nowrap; line-height: 18px; padding: 1px 0 0 1px; color: #333; }
.types li.on { background: #6f97e2; color: #fff; }
.ti { width: 16px; height: 16px; margin: -1px 2px 0 0; flex: none; }
.tiny { font: 700 5px "Liberation Sans", sans-serif; text-anchor: middle; }
.lbar { width: 15px; margin-left: 3px; flex: none; display: flex; flex-direction: column; }
.lbar-end { height: 16px; flex: none; display: flex; align-items: center; justify-content: center; }
.lthumb { height: 229px; background: #c1c1c1; flex: none; }
.lbar-fill { flex: 1; }

.snmp { flex: 1; margin: -7px 0 10px; padding: 0; min-width: 0; border: 1px solid #666; }
.snmp > legend { margin-left: 10px; padding: 0 2px; line-height: 15px; }
.f-host { display: flex; margin: 14px 0 0 9px; height: 21px; align-items: center; }
.l-host { width: 154px; padding-top: 2px; }
.inp { height: 21px; border: 1px solid #bbb; background: #fff; padding: 0 3px; margin: 0; font: 13px "Liberation Sans", sans-serif; color: #333; display: block; border-radius: 0; outline: none; }
.w173 { width: 173px; flex: none; }
.ro { background: #e4e4e4; color: #666; border-color: #aaa; }
.f-comm { display: flex; margin: 32px 0 0 14px; align-items: flex-start; }
.comm { padding-top: 7px; width: 173px; }
.comm label { display: block; line-height: 15px; white-space: nowrap; }
.ver { margin-left: 93px; }
.version { margin: 0; padding: 0; width: 110px; height: 38px; border: 1px solid #666; border-width: 2px 2px 2px 1px; min-width: 0; }
.version legend { padding: 0 2px; margin-left: 1px; line-height: 17px; }
.radios { display: flex; align-items: center; height: 17px; padding: 2px 0 0 6px; }
.rd { appearance: none; -webkit-appearance: none; width: 12px; height: 12px; margin: 0; border: 1px solid #aaa; border-radius: 50%; background: #e8e8e8; flex: none; }
.rd:checked { background: radial-gradient(circle, #666 0 3px, #e8e8e8 3.500px); }
.r2 { margin-left: 10px; }
.r3 { margin-left: 10px; }
.rl { margin: 4px 0 0 3px; line-height: 13px; color: #444; }
.v3 { display: block; margin-top: 4px; line-height: 15px; font-size: 12px; color: #33339a; text-decoration: none; white-space: nowrap; }
.f-row { display: flex; align-items: flex-start; margin-left: 11px; }
.f-row label { width: 150px; flex: none; line-height: 15px; }
.r-oid { margin-top: 9px; height: 22px; }
.r-oid label { margin-top: 2px; }
.dots { width: 16px; height: 22px; margin: 0 0 0 3px; padding: 0; border: 1px solid #ccc; background: linear-gradient(#f8f8f8, #e0e0e0); color: #444; font-size: 11px; }
.r-type { margin-top: 5px; height: 22px; }
.r-type label { margin-top: 3px; }
.selwrap { position: relative; height: 22px; flex: none; }
.selwrap::after { content: ""; position: absolute; right: 5px; top: 8px; border: 4px solid transparent; border-top: 6px solid #111; border-bottom-width: 0; pointer-events: none; }
.w80 { width: 80px; }
.w120 { width: 120px; }
.dd { appearance: none; -webkit-appearance: none; width: 100%; height: 22px; border: 1px solid #ccc; background: #fff; padding: 0 4px; margin: 0; font: 13px "Liberation Sans", sans-serif; color: #333; border-radius: 0; display: block; }
.num { width: 68px; height: 23px; flex: none; }
.unit { margin: 5px 0 0 13px; line-height: 15px; }
.r-time { margin-top: 5px; height: 23px; }
.r-time label { margin-top: 3px; }
.r-att { margin-top: 5px; height: 23px; }
.r-att label { margin-top: 3px; }
.passed { margin: 13px 0 0 11px; line-height: 15px; font-weight: 700; color: #111; }
.f-val { display: flex; align-items: center; margin: 5px 0 0 11px; height: 22px; gap: 3px; }
.f-val > span { padding-top: 2px; }
.f-val .selwrap { margin-left: 2px; }
.wide { width: 304px; margin: 5px 0 0 11px; }
.case { display: flex; align-items: center; margin: 8px 0 0 15px; height: 17px; }
.cb { appearance: none; -webkit-appearance: none; width: 12px; height: 12px; margin: 0 4px 2px 0; border: 1px solid #aaa; border-radius: 2px; background: #e6e6e6; }
.case span { padding-top: 1px; }

.wz-foot { flex: 1; display: flex; justify-content: flex-end; gap: 5px; padding: 7px 5px 0 0; background: #eef1f6; }
.btn { height: 23px; margin: 0; padding: 0; border: 1px solid #bbb; background: linear-gradient(#fbfbfb, #e2e2e2); font: 13.330px "Liberation Sans", sans-serif; color: #333; }
.b-back { width: 62px; }
.b-next { width: 59px; }
.b-cancel { width: 52px; }
```
